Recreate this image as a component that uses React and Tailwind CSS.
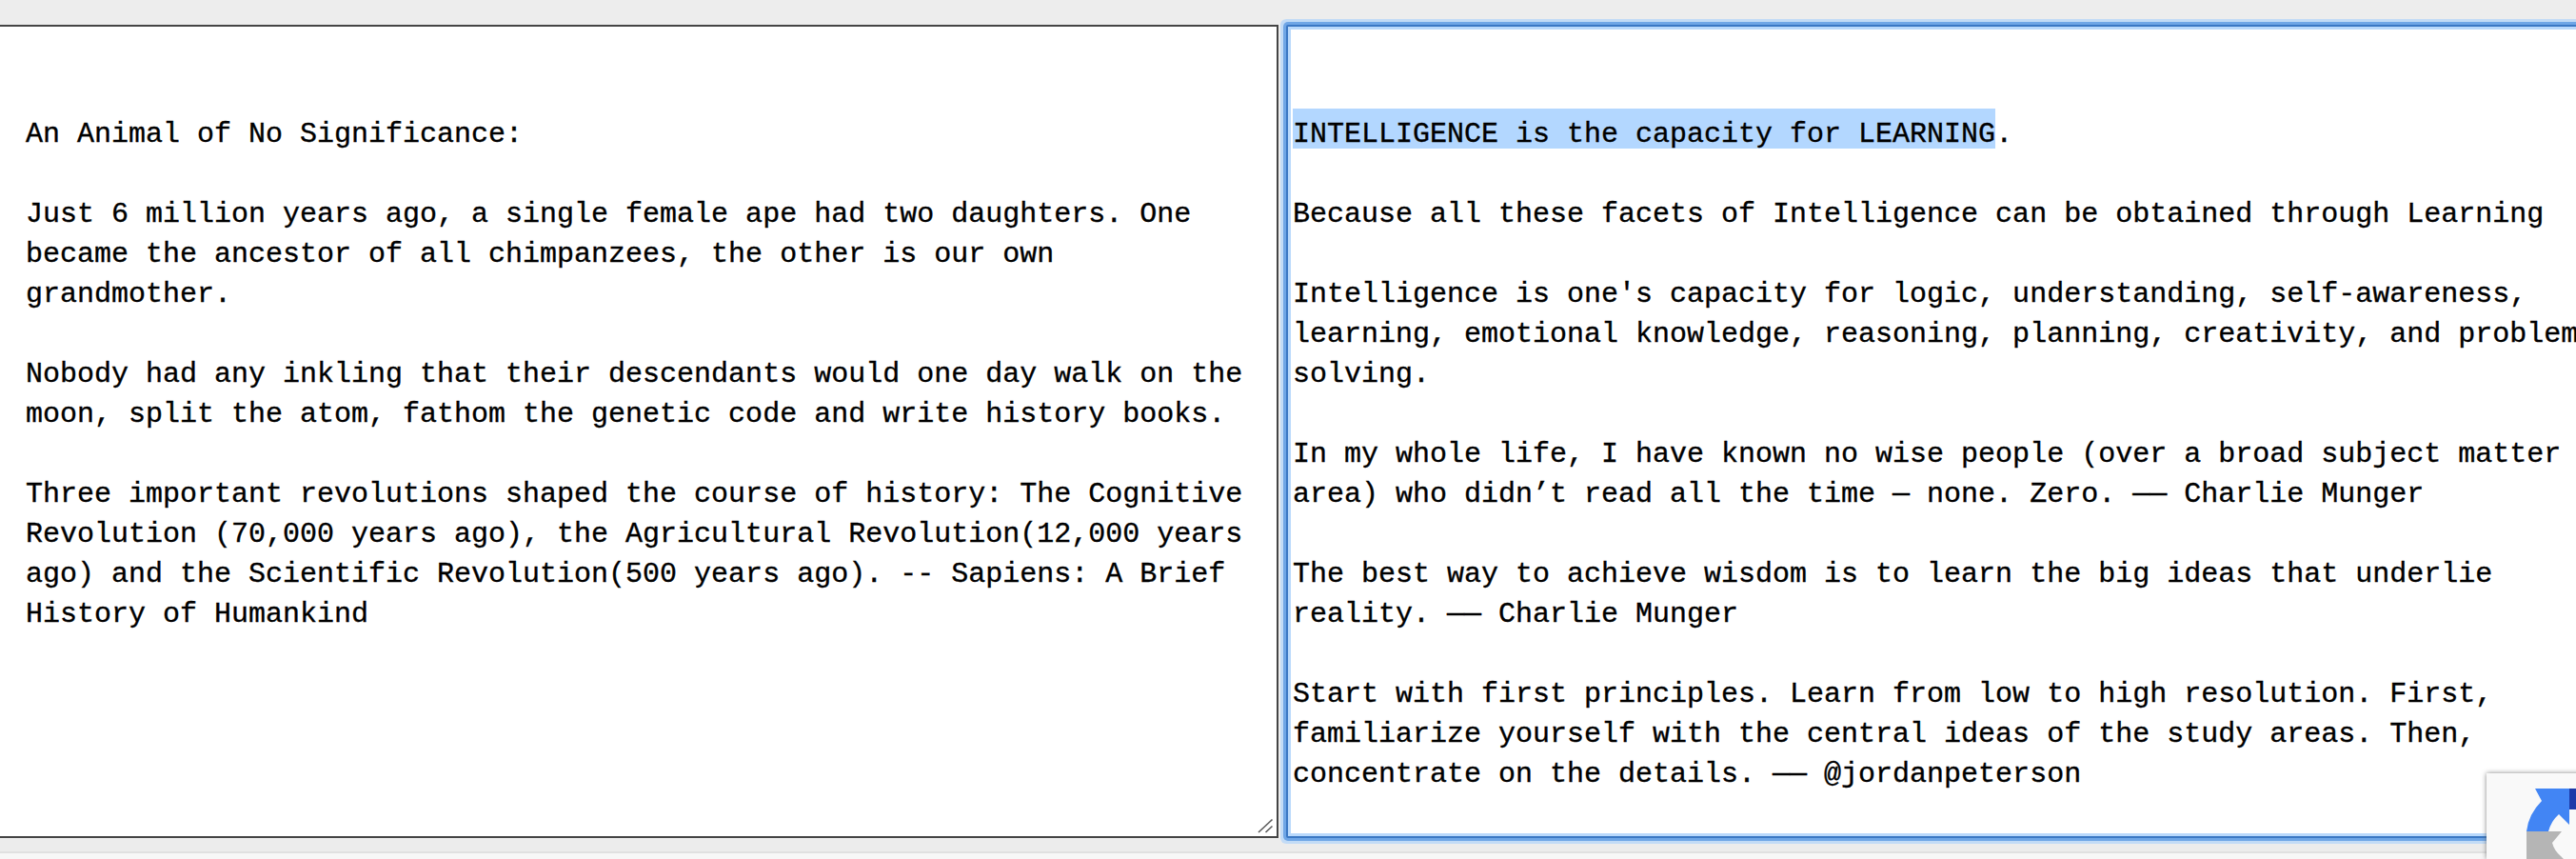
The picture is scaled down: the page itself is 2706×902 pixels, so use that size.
const mono = "font-['Liberation_Mono','Courier_New',monospace] text-[30px] leading-[42px] text-black whitespace-pre [-webkit-text-stroke:0.35px_#000]";

const leftText = `

An Animal of No Significance:

Just 6 million years ago, a single female ape had two daughters. One
became the ancestor of all chimpanzees, the other is our own
grandmother.

Nobody had any inkling that their descendants would one day walk on the
moon, split the atom, fathom the genetic code and write history books.

Three important revolutions shaped the course of history: The Cognitive
Revolution (70,000 years ago), the Agricultural Revolution(12,000 years
ago) and the Scientific Revolution(500 years ago). -- Sapiens: A Brief
History of Humankind`;

const rightText = `
Because all these facets of Intelligence can be obtained through Learning

Intelligence is one's capacity for logic, understanding, self-awareness,
learning, emotional knowledge, reasoning, planning, creativity, and problem
solving.

In my whole life, I have known no wise people (over a broad subject matter
area) who didn’t read all the time — none. Zero. —— Charlie Munger

The best way to achieve wisdom is to learn the big ideas that underlie
reality. —— Charlie Munger

Start with first principles. Learn from low to high resolution. First,
familiarize yourself with the central ideas of the study areas. Then,
concentrate on the details. —— @jordanpeterson`;

function ResizeHandle() {
  return (
    <svg className="absolute right-0 bottom-0" width="22" height="22" viewBox="0 0 22 22" fill="none" stroke="#5a5a5a" strokeWidth="1.6">
      <path d="M3 18 L17.5 4.5" />
      <path d="M10.5 18 L17.5 11.5" />
    </svg>
  );
}

function RecaptchaBadge() {
  return (
    <div className="absolute left-[2612px] top-[812px] w-[256px] h-[90px] bg-[#f9f9f9] shadow-[0_0_5px_rgba(90,90,90,0.75)] overflow-hidden">
      <svg className="absolute left-0 top-0" width="94" height="90" viewBox="2612 812 94 90">
        <path d="M2663 828 L2699 828 L2699 866 L2688 855 Q2680 862 2677 873 L2654 873 Q2656 855 2670 841 Z" fill="#4285f4" />
        <path d="M2699 828 L2706 828 L2706 850 L2699 850 Z" fill="#1c3aa9" />
        <path d="M2654 873 L2691 873 L2681 885 Q2683 893 2690 899 L2693 902 L2654 902 Z" fill="#b5b5b5" />
      </svg>
    </div>
  );
}

export default function App() {
  return (
    <div className="relative w-[2706px] h-[902px] overflow-hidden bg-[#ededed] flex flex-col">
      <div className="h-[26px] shrink-0" />
      <div className="flex h-[854px] shrink-0">
        <div className={`relative w-[1343px] shrink-0 bg-white border-y-2 border-r-2 border-[#444444] pt-[8px] pl-[27px] overflow-hidden ${mono}`}>
          {leftText}
          <ResizeHandle />
        </div>
        <div className={`relative ml-[8px] w-[1400px] shrink-0 bg-white border-2 border-[#3b78c4] rounded-[2px] shadow-[inset_0_0_0_3px_#b9d9fc,0_0_0_3px_#6fa6e6,0_0_0_6px_#c2dbf6] pt-[8px] pl-[5px] ${mono}`}>
          {"\n\n"}
          <span className="inline-block h-[42px] -mt-[6px] pt-[6px] bg-[#b3d7ff]">INTELLIGENCE is the capacity for LEARNING</span>.{"\n"}
          {rightText}
        </div>
      </div>
      <div className="flex-1 flex flex-col">
        <div className="h-[14px] bg-[#ececec]" />
        <div className="h-[2px] bg-[#e0e0e0]" />
        <div className="flex-1 bg-[#f7f7f7]" />
      </div>
      <RecaptchaBadge />
    </div>
  );
}
